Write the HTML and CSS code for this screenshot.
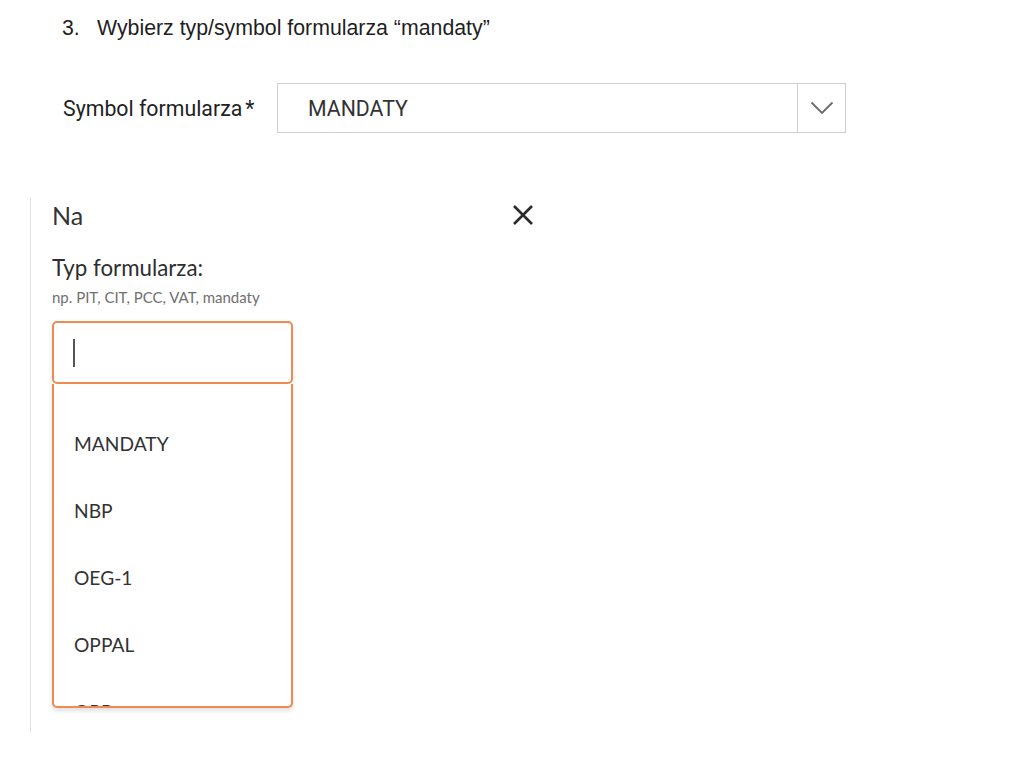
FILE: index.html
```html
<!DOCTYPE html>
<html lang="pl">
<head>
<meta charset="utf-8">
<title>Symbol formularza</title>
<link rel="stylesheet" href="styles.css">
</head>
<body>
<div class="page">
  <ol class="steps" start="3">
    <li><span class="num">3.</span><span>Wybierz typ/symbol formularza “mandaty”</span></li>
  </ol>

  <div class="symbol-row">
    <label class="symbol-label">Symbol formularza<span class="req">*</span></label>
    <div class="select">
      <div class="select-value">MANDATY</div>
      <div class="select-btn">
        <svg width="24" height="14" viewBox="0 0 24 14"><path d="M1.5 1.5 L12 12 L22.5 1.5" fill="none" stroke="#6b6b6b" stroke-width="1.8"/></svg>
      </div>
    </div>
  </div>

  <div class="panel">
    <div class="panel-head">
      <div class="panel-title">Na</div>
      <svg class="close" width="22" height="22" viewBox="0 0 22 22"><path d="M2 2 L20 20 M20 2 L2 20" stroke="#2b2b2b" stroke-width="2.6" stroke-linecap="butt"/></svg>
    </div>
    <div class="field-label">Typ formularza:</div>
    <div class="field-hint">np. PIT, CIT, PCC, VAT, mandaty</div>
    <div class="combo">
      <div class="combo-input"><span class="caret"></span></div>
      <div class="combo-list">
        <div class="combo-scroll">
          <div class="opt">MANDATY</div>
          <div class="opt">NBP</div>
          <div class="opt">OEG-1</div>
          <div class="opt">OPPAL</div>
          <div class="opt">OPP</div>
        </div>
      </div>
    </div>
  </div>
</div>
</body>
</html>
```

FILE: styles.css
```css
html, body {
  margin: 0;
  padding: 0;
  background: #ffffff;
}

.page {
  width: 1034px;
  height: 780px;
  overflow: hidden;
  position: relative;
}

.steps {
  list-style: none;
  margin: 0;
  padding: 15px 0 0 62px;
  font-family: "Liberation Sans", Arial, sans-serif;
  font-size: 21.3px;
  color: #1f1f1f;
  line-height: 26px;
}

.steps li {
  display: flex;
}

.steps .num {
  width: 35px;
}

.symbol-row {
  display: flex;
  align-items: center;
  margin: 42px 0 0 63px;
}

.symbol-label {
  font-family: Roboto, "Liberation Sans", sans-serif;
  font-size: 21.3px;
  color: #222;
  width: 214px;
}

.req {
  margin-left: 3px;
}

.select {
  display: flex;
  width: 569px;
  height: 50px;
  box-sizing: border-box;
  border: 1.5px solid #cfcfcf;
}

.select-value {
  flex: 1;
  display: flex;
  align-items: center;
  padding-left: 30px;
  font-family: Roboto, "Liberation Sans", sans-serif;
  font-size: 21.3px;
  color: #333;
}

.select-btn {
  width: 47px;
  border-left: 1.5px solid #cfcfcf;
  display: flex;
  align-items: center;
  justify-content: center;
}

.panel {
  margin: 65px 0 0 30px;
  border-left: 1.5px solid #e2e2e2;
  height: 535px;
  padding-left: 21px;
  font-family: Lato, "Open Sans", sans-serif;
}

.panel-head {
  display: flex;
  align-items: center;
  width: 482px;
  justify-content: space-between;
  padding-top: 3px;
}

.panel-title {
  font-size: 25px;
  color: #333;
  line-height: 28px;
}

.close {
  display: block;
}

.field-label {
  margin-top: 25px;
  font-size: 22.3px;
  color: #2e2e2e;
  line-height: 28px;
}

.field-hint {
  font-size: 15px;
  color: #6f6f6f;
  line-height: 20px;
  margin-top: 5px;
}

.combo {
  margin-top: 14px;
  width: 241px;
  box-shadow: 0 3px 4px rgba(0, 0, 0, 0.12);
  border-radius: 5px;
}

.combo-input {
  height: 63px;
  box-sizing: border-box;
  border: 2px solid #f08a50;
  border-radius: 5px;
  display: flex;
  align-items: center;
  padding-left: 19px;
}

.caret {
  display: block;
  width: 2px;
  height: 28px;
  background: #555;
}

.combo-list {
  height: 324px;
  box-sizing: border-box;
  border: 2px solid #f08a50;
  border-top: none;
  border-radius: 0 0 5px 5px;
  overflow: hidden;
}

.combo-scroll {
  padding-top: 26px;
}

.opt {
  height: 67px;
  display: flex;
  align-items: center;
  padding-left: 20px;
  font-size: 19.2px;
  color: #333;
}
```
